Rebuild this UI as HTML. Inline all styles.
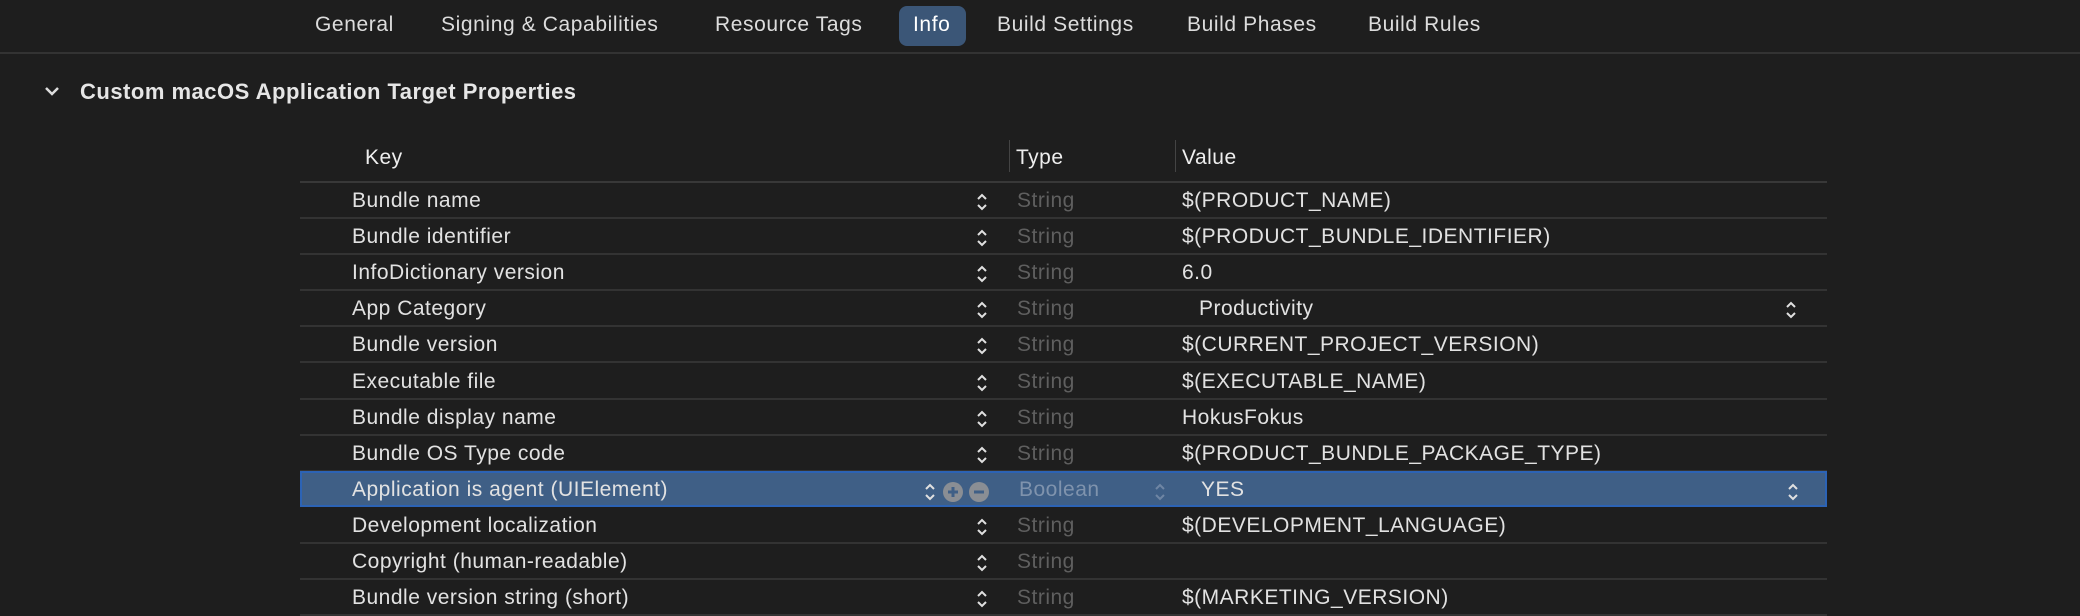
<!DOCTYPE html>
<html><head><meta charset="utf-8"><style>
*{margin:0;padding:0;box-sizing:border-box}
body{width:2080px;height:610px;background:#1e1e1e;font-family:"Liberation Sans",sans-serif;color:#e2e2e2;position:relative;overflow:hidden}
.t{position:absolute;white-space:nowrap}
.tab{position:absolute;top:13px;font-size:21px;letter-spacing:0.6px;color:#dcdcdc}
.pill{position:absolute;left:899px;top:6px;width:67px;height:40px;background:#3b5677;border-radius:8px}
.sep{position:absolute;left:0;top:52px;width:2080px;height:2px;background:#333}
.row{position:absolute;left:300px;width:1527px;height:36px;border-bottom:2px solid #333;font-size:21px;letter-spacing:0.5px}
.row span{position:absolute;top:6px;white-space:nowrap}
.k{left:52px;color:#e2e2e2}
.ty{left:717px;color:#5f5f5f}
.v{left:882px;color:#e2e2e2}
.st{position:absolute;top:9px;width:12px;height:20px}
</style></head><body>
<div class="pill"></div>
<div class="tab" style="left:315px">General</div>
<div class="tab" style="left:441px">Signing &amp; Capabilities</div>
<div class="tab" style="left:715px">Resource Tags</div>
<div class="tab" style="left:913px;color:#fff">Info</div>
<div class="tab" style="left:997px">Build Settings</div>
<div class="tab" style="left:1187px">Build Phases</div>
<div class="tab" style="left:1368px">Build Rules</div>
<div class="sep"></div>
<svg class="t" style="left:44px;top:86px" width="16" height="12"><path d="M2 2l6 6 6-6" stroke="#ddd" stroke-width="2.5" fill="none"/></svg>
<div class="t" style="left:80px;top:79px;font-size:22px;letter-spacing:0.5px;font-weight:bold;color:#e6e6e6">Custom macOS Application Target Properties</div>
<div class="t" style="left:365px;top:146px;font-size:21px;letter-spacing:0.5px;color:#eee">Key</div>
<div class="t" style="left:1009px;top:140px;width:1px;height:32px;background:#444"></div>
<div class="t" style="left:1016px;top:146px;font-size:21px;letter-spacing:0.5px;color:#eee">Type</div>
<div class="t" style="left:1175px;top:140px;width:1px;height:32px;background:#444"></div>
<div class="t" style="left:1182px;top:146px;font-size:21px;letter-spacing:0.5px;color:#eee">Value</div>
<div class="t" style="left:300px;top:181px;width:1527px;height:2px;background:#383838"></div>
<div id="rows"></div>
<script>
var R=[["Bundle name","String","$(PRODUCT_NAME)"],["Bundle identifier","String","$(PRODUCT_BUNDLE_IDENTIFIER)"],["InfoDictionary version","String","6.0"],["App Category","String","Productivity",1],["Bundle version","String","$(CURRENT_PROJECT_VERSION)"],["Executable file","String","$(EXECUTABLE_NAME)"],["Bundle display name","String","HokusFokus"],["Bundle OS Type code","String","$(PRODUCT_BUNDLE_PACKAGE_TYPE)"],["Application is agent (UIElement)","Boolean","YES",2],["Development localization","String","$(DEVELOPMENT_LANGUAGE)"],["Copyright (human-readable)","String",""],["Bundle version string (short)","String","$(MARKETING_VERSION)"]];
function st(x,c){return '<svg class="st" style="left:'+x+'px" viewBox="0 0 12 20"><path d="M2 7l4-4 4 4M2 13l4 4 4-4" stroke="'+c+'" stroke-width="2" fill="none"/></svg>'}
var h='';
R.forEach(function(r,i){var top=183+i*36.1,sel=r[3]==2;
h+='<div class="row" style="top:'+top+'px;'+(sel?'background:#3f5f86;border:2px solid #2c63b5;top:'+(top-1)+'px;height:36px;':'')+'">';
h+='<span class="k" style="'+(sel?'left:50px;top:5px':'')+'">'+r[0]+'</span>';
if(sel){h+=st(622,'#e0e0e0')+'<svg class="st" style="left:640px;top:8px;width:48px;height:22px"><circle cx="11" cy="11" r="10" fill="#8a8e94"/><path d="M11 6v10M6 11h10" stroke="#3f5f86" stroke-width="3"/><circle cx="37" cy="11" r="10" fill="#8a8e94"/><path d="M32 11h10" stroke="#3f5f86" stroke-width="3"/></svg>'+st(852,'#6f86a4');}
else h+=st(676,'#e0e0e0');
h+='<span class="ty" style="'+(sel?'color:#7f93ad;top:5px':'')+'">'+r[1]+'</span>';
h+='<span class="v" style="'+(r[3]?'left:899px;':'')+(sel?'top:5px':'')+'">'+r[2]+'</span>';
if(r[3])h+=st(1485,'#e0e0e0');
h+='</div>';});
document.getElementById('rows').innerHTML=h;
</script>
</body></html>
